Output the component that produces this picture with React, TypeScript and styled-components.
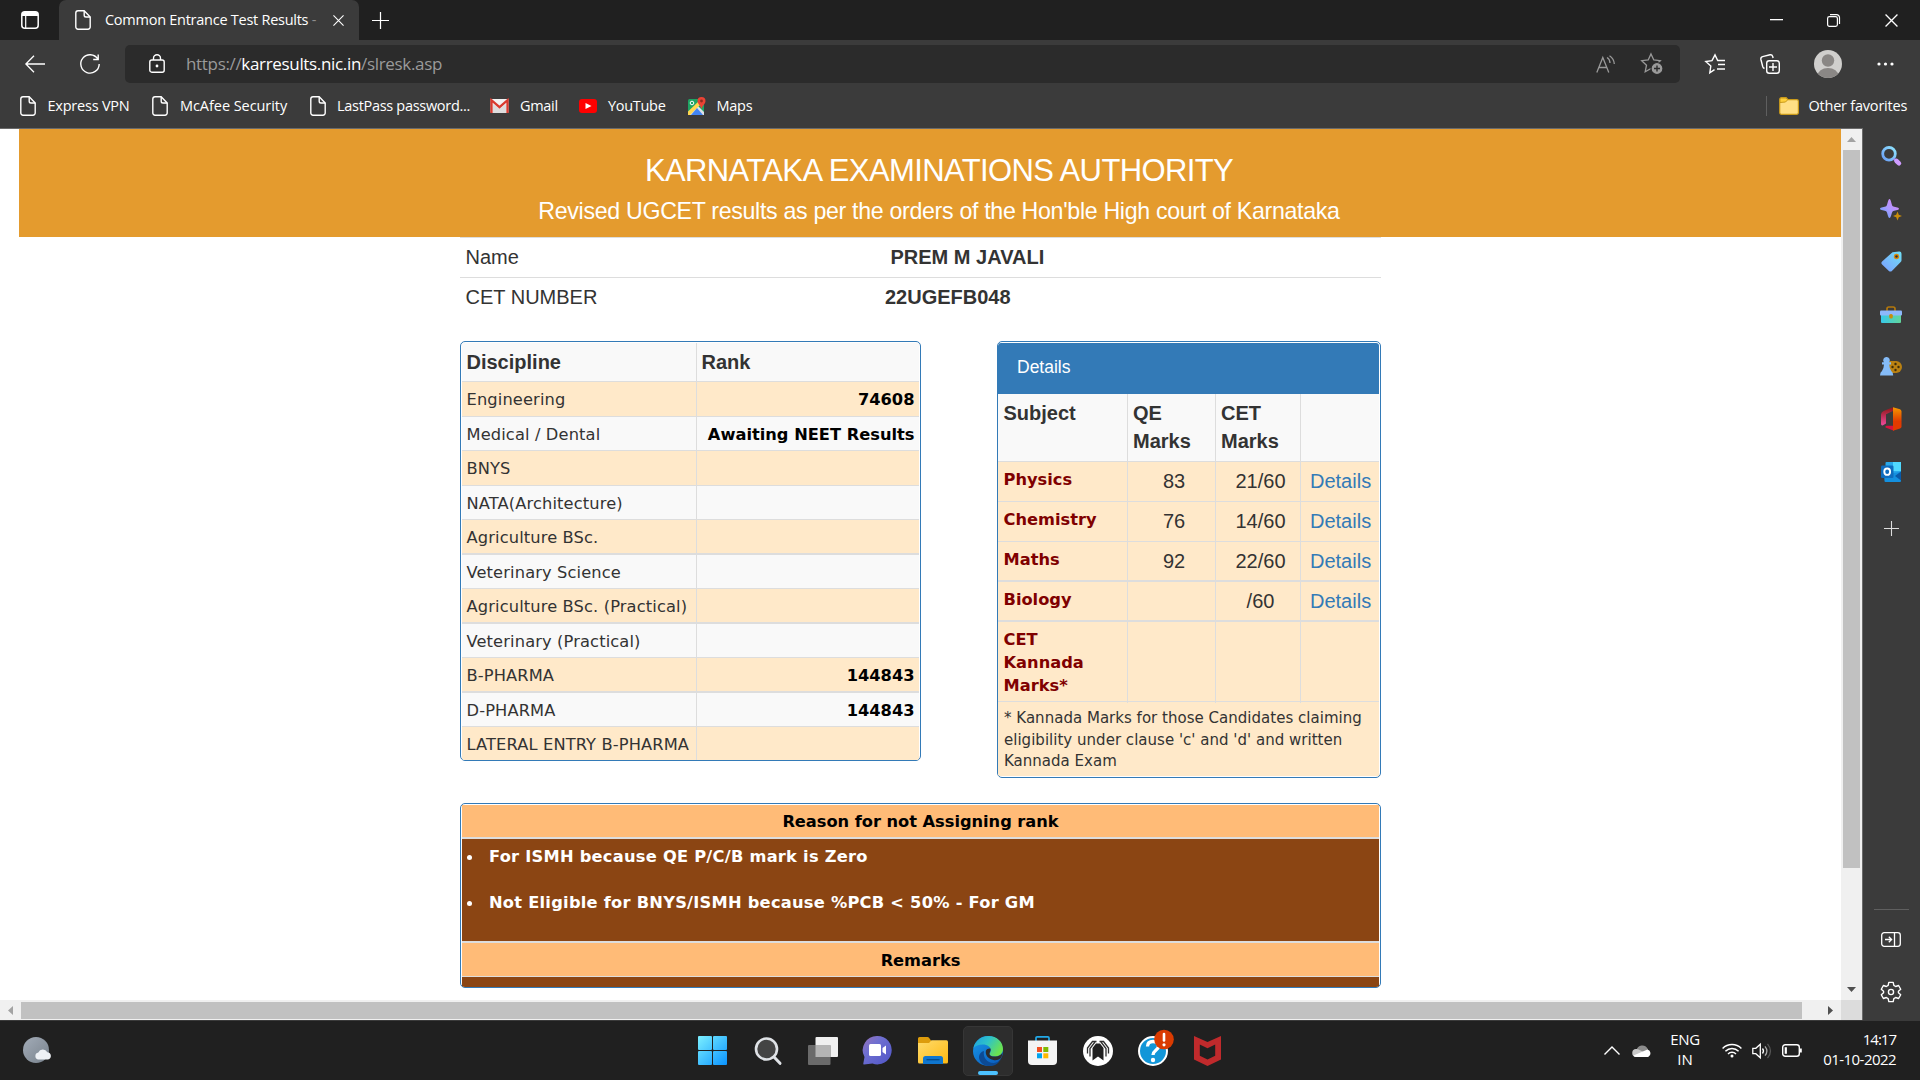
import React from "react";
import styled, { createGlobalStyle } from "styled-components";

const ui = `"Open Sans", "Noto Sans", sans-serif`;
const arial = `"Liberation Sans", Arial, sans-serif`;
const verdana = `"DejaVu Sans", Verdana, sans-serif`;

const GlobalStyle = createGlobalStyle`
  * { box-sizing: border-box; }
  html, body { margin: 0; padding: 0; overflow: hidden; background: #202020; }
  svg { display: block; flex: none; overflow: visible; }
`;

const Window = styled.div`
  width: 1920px;
  height: 1080px;
  display: flex;
  flex-direction: column;
  font-family: ${ui};
  color: #fff;
  background: #3b3b3b;
  overflow: hidden;
`;

const Label = styled.span<{ $size?: number; $track?: number; $color?: string }>`
  flex: none;
  white-space: pre;
  font-size: ${(p) => p.$size ?? 14.5}px;
  letter-spacing: ${(p) => p.$track ?? 0}px;
  color: ${(p) => p.$color ?? "#fff"};
`;

const Slot = styled.div<{ $w: number; $h?: number }>`
  flex: none;
  width: ${(p) => p.$w}px;
  height: ${(p) => (p.$h ? `${p.$h}px` : "100%")};
  display: flex;
  align-items: center;
  justify-content: center;
`;

/* ---------- title bar ---------- */
const TitleBar = styled.header`
  flex: none;
  height: 40px;
  display: flex;
  align-items: center;
  background: #202020;
`;
const Tab = styled.div`
  flex: none;
  width: 300px;
  height: 40px;
  display: flex;
  align-items: center;
  padding-left: 14px;
  background: #3b3b3b;
  border-radius: 7px 7px 0 0;
`;
const TabTitle = styled.div`
  width: 221px;
  padding-left: 12px;
  margin-top: -2px;
  white-space: nowrap;
`;
const Spacer = styled.div`
  flex: 1;
`;

/* ---------- toolbar ---------- */
const Toolbar = styled.div`
  flex: none;
  height: 47px;
  display: flex;
  align-items: center;
`;
const AddressBar = styled.div`
  flex: none;
  width: 1555px;
  height: 38px;
  display: flex;
  align-items: center;
  border-radius: 5px;
  background: #2b2b2b;
`;
const Url = styled.div`
  padding-left: 17px;
  padding-bottom: 1px;
  display: flex;
`;
const Bookmarks = styled.nav`
  flex: none;
  height: 41px;
  display: flex;
  align-items: center;
  padding: 0 13px 3px 20px;
`;
const Bookmark = styled.div<{ $w: number; $gap: number }>`
  flex: none;
  width: ${(p) => p.$w}px;
  display: flex;
  align-items: center;
  gap: ${(p) => p.$gap}px;
  > span { margin-top: -2px; }
`;
const Divider = styled.div<{ $w: number; $h: number }>`
  flex: none;
  width: ${(p) => p.$w}px;
  height: ${(p) => p.$h}px;
  background: #5f5f5f;
`;

/* ---------- viewport ---------- */
const Middle = styled.div`
  flex: none;
  height: 892px;
  display: flex;
`;
const Viewport = styled.div`
  width: 1863px;
  display: grid;
  grid-template-columns: 1841px 21px;
  grid-template-rows: 871px 20px;
  border-top: 1px solid #6a6a6a;
  border-right: 1px solid #6a6a6a;
  background: #fff;
`;
const Page = styled.main`
  overflow: hidden;
  padding-left: 19px;
  background: #fff;
  color: #333;
  font-family: ${arial};
`;
const VScroll = styled.div`
  display: flex;
  flex-direction: column;
  align-items: center;
  justify-content: space-between;
  background: #f0f0f0;
`;
const HScroll = styled.div`
  display: flex;
  align-items: center;
  justify-content: space-between;
  background: #f0f0f0;
`;
const VThumb = styled.div`
  width: 17px;
  height: 718px;
  background: #c1c1c1;
`;
const HThumb = styled.div`
  width: 1781px;
  height: 17px;
  background: #c1c1c1;
`;
const Corner = styled.div`
  background: #dcdcdc;
`;

/* ---------- page content ---------- */
const Banner = styled.div`
  height: 108px;
  padding-top: 24px;
  text-align: center;
  color: #fff;
  background: #e49b2e;
`;
const Title = styled.h1`
  margin: 0 -18px 0 0;
  font-weight: 400;
  font-size: 31px;
  line-height: 36px;
  letter-spacing: -0.62px;
`;
const Subtitle = styled.h2`
  margin: 4px -18px 0 0;
  font-weight: 400;
  font-size: 23.2px;
  line-height: 36px;
  letter-spacing: -0.32px;
`;
const Content = styled.div`
  width: 921px;
  margin-left: 441px;
`;
const Identity = styled.div<{ $indent: number }>`
  height: 40px;
  display: flex;
  align-items: center;
  border-top: 1px solid #ddd;
  padding-left: 5.5px;
  font-size: 20px;
  > span { width: ${(p) => p.$indent}px; }
`;
const Panels = styled.div<{ $top: number }>`
  display: flex;
  align-items: flex-start;
  justify-content: space-between;
  margin-top: ${(p) => p.$top}px;
`;
const Panel = styled.section<{ $w: number; $h: number; $flush?: boolean }>`
  width: ${(p) => p.$w}px;
  height: ${(p) => p.$h}px;
  overflow: hidden;
  border: 1px solid #337ab7;
  border-radius: 5px;
  padding: 1px;
  padding-left: ${(p) => (p.$flush ? 0 : 1)}px;
  background: #fff;
`;
const RankRow = styled.div<{ $h: number; $tint?: boolean; $line?: number }>`
  height: ${(p) => p.$h}px;
  display: grid;
  grid-template-columns: 234px 1fr;
  background: ${(p) => (p.$tint ? "#ffe9c9" : "#f9f9f9")};
  border-top: ${(p) => p.$line ?? 1}px solid #ddd;
`;
const Cell = styled.div<{ $head?: boolean; $end?: boolean }>`
  display: flex;
  align-items: center;
  justify-content: ${(p) => (p.$end ? "flex-end" : "flex-start")};
  padding: 1px 4.5px 0 4.5px;
  white-space: nowrap;
  font-family: ${(p) => (p.$head ? arial : verdana)};
  font-size: ${(p) => (p.$head ? 20 : 16.25)}px;
  letter-spacing: ${(p) => (p.$head || p.$end ? 0 : 0.13)}px;
  font-weight: ${(p) => (p.$head || p.$end ? 700 : 400)};
  color: ${(p) => (p.$end ? "#000" : "#333")};
  & + & { border-left: 1px solid #ddd; }
`;
const PanelHead = styled.div`
  height: 51px;
  display: flex;
  align-items: center;
  padding: 0 0 3px 19px;
  border-radius: 3px 3px 0 0;
  color: #fff;
  background: #337ab7;
  font-size: 17.5px;
`;
const MarksRow = styled.div<{ $h: number; $head?: boolean; $line?: number }>`
  height: ${(p) => p.$h}px;
  display: grid;
  grid-template-columns: 129px 88px 85px 1fr;
  background: ${(p) => (p.$head ? "#f9f9f9" : "#ffe9c9")};
  border-top: ${(p) => p.$line ?? 1}px solid #ddd;
`;
const MarksCell = styled.div<{ $kind: "head" | "subject" | "mark" | "link" }>`
  padding: ${(p) => ({ head: "5px 5px", subject: "6px 5.5px", mark: "5px 0 0 5px", link: "5px 0 0 9px" })[p.$kind]};
  text-align: ${(p) => (p.$kind === "mark" ? "center" : "left")};
  font-family: ${(p) => (p.$kind === "subject" ? verdana : arial)};
  font-size: ${(p) => (p.$kind === "subject" ? 16.25 : 20)}px;
  line-height: ${(p) => (p.$kind === "subject" ? 23 : 28)}px;
  font-weight: ${(p) => (p.$kind === "head" || p.$kind === "subject" ? 700 : 400)};
  color: ${(p) => ({ head: "#333", subject: "#800000", mark: "#333", link: "#337ab7" })[p.$kind]};
  &:first-child { padding-left: 5.5px; }
  & + & { border-left: 1px solid #ddd; }
  &:nth-child(2) { border-left-width: 2px; }
`;
const Note = styled.div`
  height: 75px;
  padding: 6px 5px 0 6px;
  white-space: pre;
  font-family: ${verdana};
  font-size: 15px;
  line-height: 21.5px;
  letter-spacing: 0.02px;
  background: #ffe9c9;
  border-top: 1px solid #ddd;
`;
const ReasonHead = styled.div<{ $h: number; $line?: number }>`
  height: ${(p) => p.$h}px;
  display: flex;
  align-items: center;
  justify-content: center;
  padding-top: 1px;
  font-family: ${verdana};
  font-size: 16.25px;
  letter-spacing: -0.03px;
  font-weight: 700;
  color: #000;
  background: #ffbb77;
  border-top: ${(p) => p.$line ?? 0}px solid #ddd;
`;
const ReasonBody = styled.ul<{ $h: number; $line: number }>`
  height: ${(p) => p.$h}px;
  margin: 0;
  padding: 6px 0 0 5px;
  list-style: none;
  font-family: ${verdana};
  font-size: 16.25px;
  letter-spacing: 0.25px;
  line-height: 23px;
  font-weight: 700;
  color: #fff;
  background: #8b4513;
  border-top: ${(p) => p.$line}px solid #ddd;
  > li {
    display: flex;
    align-items: center;
    gap: 17px;
    margin-bottom: 23px;
  }
  > li::before {
    content: "";
    width: 5px;
    height: 5px;
    margin-top: 2px;
    border-radius: 50%;
    background: #fff;
  }
`;

/* ---------- sidebar & taskbar ---------- */
const Sidebar = styled.aside`
  flex: 1;
  display: flex;
  flex-direction: column;
  align-items: center;
  padding-right: 1px;
  background: #3b3b3b;
`;
const Taskbar = styled.footer`
  flex: none;
  height: 60px;
  display: flex;
  align-items: center;
  background: #202020;
  border-top: 1px solid #3a3a3a;
`;
const ActiveApp = styled.div`
  width: 50px;
  height: 50px;
  display: flex;
  flex-direction: column;
  align-items: center;
  justify-content: space-between;
  padding: 9px 0 0;
  border-radius: 5px;
  border: 1px solid #363636;
  background: #2d2d2d;
`;
const Indicator = styled.div`
  width: 20px;
  height: 4px;
  border-radius: 2px;
  background: #4cc2ff;
`;
const Stack = styled.div<{ $w: number; $end?: boolean }>`
  flex: none;
  width: ${(p) => p.$w}px;
  display: flex;
  flex-direction: column;
  align-items: ${(p) => (p.$end ? "flex-end" : "center")};
  line-height: 20px;
  padding-bottom: ${(p) => (p.$end ? 4 : 3)}px;
`;

/* ---------- icons ---------- */
const Doc = ({ w = 16 }: { w?: number }) => (
  <svg width={w} height={(w * 20) / 16} viewBox="0 0 16 20" fill="none" stroke="#fff" strokeWidth="1.4" strokeLinejoin="round">
    <path d="M3 .8h6.2L15.2 7v10a2.2 2.2 0 0 1-2.2 2.2H3A2.2 2.2 0 0 1 .8 17V3A2.2 2.2 0 0 1 3 .8z" />
    <path d="M9.2 .8v4.4A1.8 1.8 0 0 0 11 7h4.2" />
  </svg>
);
const Plus = ({ s = 18, c = "#fff" }: { s?: number; c?: string }) => (
  <svg width={s} height={s} viewBox="0 0 18 18" stroke={c} strokeWidth="1.3"><path d="M9 0v18M0 9h18" /></svg>
);
const Cross = ({ s }: { s: number }) => (
  <svg width={s} height={s} viewBox="0 0 12 12" stroke="#fff" strokeWidth="1.2"><path d="M.5.5l11 11M11.5.5l-11 11" /></svg>
);
const Sparkle = () => (
  <svg width="22" height="22" viewBox="0 0 22 22">
    <defs><linearGradient id="sp" x1="0" y1="1" x2="1" y2="0"><stop offset="0" stopColor="#4f9ef8" /><stop offset=".45" stopColor="#a99bff" /><stop offset="1" stopColor="#e080f5" /></linearGradient></defs>
    <path d="M9.5 0c1.5 0 2 6.300 3.300 7.200C14 8.200 19 8.200 19 9.700s-5 1.500-6.200 2.500C11.500 13.500 11 19 9.500 19S7.500 13.500 6.200 12.200C5 11.200 0 11.200 0 9.700s5-1.500 6.200-2.500C7.500 6.300 8 0 9.500 0z" fill="url(#sp)" />
    <path d="M17.500 12.500l1.300 3.200 3.200 1.300-3.200 1.300-1.300 3.200-1.300-3.200-3.200-1.300 3.200-1.300z" fill="#c98d0a" />
  </svg>
);
const starPath = "M10 .9l2.800 6 6.500.8-4.800 4.500 1.300 6.500L10 15.500l-5.800 3.200 1.300-6.500L.7 7.700l6.500-.8z";

const disciplines: [string, string, number, number][] = [
  ["Engineering", "74608", 35, 1],
  ["Medical / Dental", "Awaiting NEET Results", 34, 1],
  ["BNYS", "", 35, 1],
  ["NATA(Architecture)", "", 34, 1],
  ["Agriculture BSc.", "", 34, 1],
  ["Veterinary Science", "", 35, 2],
  ["Agriculture BSc. (Practical)", "", 34, 1],
  ["Veterinary (Practical)", "", 35, 2],
  ["B-PHARMA", "144843", 34, 1],
  ["D-PHARMA", "144843", 35, 2],
  ["LATERAL ENTRY B-PHARMA", "", 34, 1],
];
const marks: [string, string, string, string, number, number][] = [
  ["Physics", "83", "21/60", "Details", 40, 1],
  ["Chemistry", "76", "14/60", "Details", 40, 1],
  ["Maths", "92", "22/60", "Details", 39, 1],
  ["Biology", "", "/60", "Details", 40, 2],
  ["CET\nKannada\nMarks*", "", "", "", 81, 2],
];

export default function App() {
  return (
    <Window>
      <GlobalStyle />
      <TitleBar>
        <Slot $w={59}>
          <svg width="18" height="18" viewBox="0 0 18 18">
            <rect x=".8" y=".8" width="16.400" height="16.400" rx="3" fill="none" stroke="#fff" strokeWidth="1.500" />
            <path d="M1 5V3.500A2.500 2.500 0 0 1 3.500 1h11A2.500 2.500 0 0 1 17 3.500V5z" fill="#fff" />
            <path d="M4.700 5v12" stroke="#fff" strokeWidth="1.200" />
          </svg>
        </Slot>
        <Tab>
          <Slot $w={20}><Doc /></Slot>
          <TabTitle><Label $track={-0.26}>Common Entrance Test Results <Label $color="#8d8d8d">-</Label></Label></TabTitle>
          <Slot $w={48}><Cross s={11} /></Slot>
        </Tab>
        <Slot $w={43}><Plus s={17} /></Slot>
        <Spacer />
        <Slot $w={58}><svg width="13" height="2"><rect width="13" height="1.300" fill="#fff" /></svg></Slot>
        <Slot $w={57}>
          <svg width="13" height="13" viewBox="0 0 13 13" fill="none" stroke="#fff" strokeWidth="1.200">
            <rect x=".6" y="2.600" width="9.800" height="9.800" rx="1.800" /><path d="M3 .6h6.500a3 3 0 0 1 3 3V10" />
          </svg>
        </Slot>
        <Slot $w={58}><Cross s={13} /></Slot>
      </TitleBar>

      <Toolbar>
        <Slot $w={70}>
          <svg width="20" height="18" viewBox="0 0 20 18" fill="none" stroke="#fff" strokeWidth="1.300"><path d="M20 9H1M9 .8L.9 9 9 17.200" /></svg>
        </Slot>
        <Slot $w={40}>
          <svg width="20" height="20" viewBox="0 0 20 20" fill="none" stroke="#fff" strokeWidth="1.400"><path d="M17.800 5A9.200 9.200 0 1 0 19.200 10M18.200 .5V5.500h-5" /></svg>
        </Slot>
        <Slot $w={15} />
        <AddressBar>
          <Slot $w={20} />
          <Slot $w={24}>
            <svg width="16" height="19" viewBox="0 0 16 19" fill="none" stroke="#fff" strokeWidth="1.400">
              <rect x=".8" y="6" width="14.400" height="12.200" rx="2" /><path d="M4.500 6V4.200a3.500 3.500 0 0 1 7 0V6" /><circle cx="8" cy="12" r=".7" fill="#fff" />
            </svg>
          </Slot>
          <Url>
            <Label $size={17} $track={-0.33} $color="#9a9a9a">https://</Label>
            <Label $size={17} $track={-0.33}>karresults.nic.in</Label>
            <Label $size={17} $track={-0.33} $color="#9a9a9a">/slresk.asp</Label>
          </Url>
          <Spacer />
          <Slot $w={46}>
            <svg width="20" height="18" viewBox="0 0 20 18" fill="none" stroke="#9a9a9a" strokeWidth="1.300">
              <path d="M.8 17.500L6.800 2.500l6 15M3 12.500h7.600M11 2.500c2 1.200 3 3 3 5.500M13.500 .8c3 2 4.600 4.700 4.800 8.200" />
            </svg>
          </Slot>
          <Slot $w={46}>
            <svg width="22" height="21" viewBox="0 0 22 21" fill="none" stroke="#9a9a9a" strokeWidth="1.300">
              <path d={starPath} /><circle cx="16" cy="15.500" r="6" fill="#9a9a9a" stroke="#2b2b2b" strokeWidth="1.200" /><path d="M16 12.500v6M13 15.500h6" stroke="#2b2b2b" strokeWidth="1.400" />
            </svg>
          </Slot>
          <Slot $w={5} />
        </AddressBar>
        <Slot $w={70}>
          <svg width="20" height="20" viewBox="0 0 20 20" fill="none" stroke="#fff" strokeWidth="1.400">
            <path d="M9.500 15.600L4.800 18.800l1-6.700L.8 7.500l6.200-.9L10 .9l2.700 5.600H20M13 10.500h7M12 15h8" />
          </svg>
        </Slot>
        <Slot $w={40}>
          <svg width="20" height="20" viewBox="0 0 20 20" fill="none" stroke="#fff" strokeWidth="1.400">
            <rect x="6.700" y="6.700" width="12.600" height="12.600" rx="2.500" /><path d="M13 9v8M9 13h8M4.500 14.500C3.500 14 3 13.500 2.700 12.500L.9 5.500C.6 4 1.200 3 2.600 2.600L10 .8c1.400-.3 2.300.4 2.700 1.700l.4 1.500" />
          </svg>
        </Slot>
        <Slot $w={76}>
          <svg width="28" height="28" viewBox="0 0 28 28">
            <defs><clipPath id="av"><circle cx="14" cy="14" r="14" /></clipPath></defs>
            <circle cx="14" cy="14" r="14" fill="#d0cfcd" /><circle cx="14" cy="10.500" r="6.200" fill="#8a8785" />
            <ellipse cx="14" cy="26" rx="10.500" ry="8" fill="#8a8785" clipPath="url(#av)" />
          </svg>
        </Slot>
        <Slot $w={38}>
          <svg width="17" height="4" viewBox="0 0 17 4" fill="#fff"><circle cx="2" cy="2" r="1.600" /><circle cx="8.500" cy="2" r="1.600" /><circle cx="15" cy="2" r="1.600" /></svg>
        </Slot>
      </Toolbar>

      <Bookmarks>
        <Bookmark $w={132} $gap={11.5}><Doc /><Label $track={-0.22}>Express VPN</Label></Bookmark>
        <Bookmark $w={158} $gap={12}><Doc /><Label $track={-0.06}>McAfee Security</Label></Bookmark>
        <Bookmark $w={180} $gap={11}><Doc /><Label $track={-0.3}>LastPass password...</Label></Bookmark>
        <Bookmark $w={89} $gap={11}>
          <svg width="19" height="16" viewBox="0 0 19 16"><rect x=".5" y="1" width="18" height="14" rx="1" fill="#f2f2f2" /><path d="M3 15V6l6.500 5L16 6v9z" fill="#ddd" /><path d="M1.500 15V2.200l8 7 8-7V15" fill="none" stroke="#d93a2f" strokeWidth="2.300" /></svg>
          <Label $track={-0.3}>Gmail</Label>
        </Bookmark>
        <Bookmark $w={109} $gap={11}>
          <svg width="18" height="14" viewBox="0 0 18 14"><rect width="18" height="14" rx="3" fill="#f00" /><path d="M6.500 4l6 3-6 3z" fill="#fff" /></svg>
          <Label $track={-0.3}>YouTube</Label>
        </Bookmark>
        <Bookmark $w={90} $gap={10.5}>
          <svg width="18" height="18" viewBox="0 0 18 18">
            <rect x="0" y="2" width="16" height="16" rx="1.500" fill="#1fa463" /><path d="M0 17L9 8l7 7v3H0z" fill="#dde1e6" /><path d="M0 14.500L12 3l3 2L2 18H0z" fill="#ffd64f" /><path d="M9 11l6 7H3z" fill="#4285f4" />
            <path d="M13.500 0a4 4 0 0 1 4 4c0 3-3 4-4 8-1-4-4-5-4-8a4 4 0 0 1 4-4z" fill="#ea4335" /><circle cx="13.500" cy="4" r="1.400" fill="#8c2d20" />
            <circle cx="4" cy="6" r="1.800" fill="none" stroke="#fff" strokeWidth="1" />
          </svg>
          <Label $track={-0.25}>Maps</Label>
        </Bookmark>
        <Spacer />
        <Divider $w={1} $h={20} />
        <Slot $w={12} $h={20} />
        <Bookmark $w={128} $gap={9.5}>
          <svg width="20" height="18" viewBox="0 0 20 18"><path d="M.7 2.500A1.800 1.800 0 0 1 2.500.7h4.600L9 2.600h8.700A1.700 1.700 0 0 1 19.400 4.300v11.300a1.700 1.700 0 0 1-1.700 1.700H2.400A1.700 1.700 0 0 1 .7 15.600z" fill="#ffdf85" stroke="#c99a1b" strokeWidth="1.200" /><path d="M1 5.500V2.500A1.600 1.600 0 0 1 2.500 1h4.500l1.700 1.800L6.500 5z" fill="#ffd03c" stroke="#c99a1b" /></svg>
          <Label $track={-0.22}>Other favorites</Label>
        </Bookmark>
      </Bookmarks>

      <Middle>
        <Viewport>
          <Page>
            <Banner>
              <Title>KARNATAKA EXAMINATIONS AUTHORITY</Title>
              <Subtitle>Revised UGCET results as per the orders of the Hon'ble High court of Karnataka</Subtitle>
            </Banner>
            <Content>
              <Identity $indent={425}><span>Name</span><b>PREM M JAVALI</b></Identity>
              <Identity $indent={419.5}><span>CET NUMBER</span><b>22UGEFB048</b></Identity>
              <Panels $top={24}>
                <Panel $w={461} $h={420}>
                  <RankRow $h={38} $line={0}><Cell $head>Discipline</Cell><Cell $head>Rank</Cell></RankRow>
                  {disciplines.map(([name, rank, h, line], i) => (
                    <RankRow key={name} $h={h} $line={line} $tint={i % 2 === 0}>
                      <Cell>{name}</Cell>
                      <Cell $end>{rank}</Cell>
                    </RankRow>
                  ))}
                </Panel>
                <Panel $w={384} $h={437} $flush>
                  <PanelHead>Details</PanelHead>
                  <MarksRow $h={67} $line={0} $head>
                    <MarksCell $kind="head">Subject</MarksCell><MarksCell $kind="head">QE Marks</MarksCell><MarksCell $kind="head">CET Marks</MarksCell><MarksCell $kind="head" />
                  </MarksRow>
                  {marks.map(([s, qe, cet, d, h, line]) => (
                    <MarksRow key={s} $h={h} $line={line}>
                      <MarksCell $kind="subject">{s.split("\n").map((t) => <div key={t}>{t}</div>)}</MarksCell>
                      <MarksCell $kind="mark">{qe}</MarksCell>
                      <MarksCell $kind="mark">{cet}</MarksCell>
                      <MarksCell $kind="link">{d}</MarksCell>
                    </MarksRow>
                  ))}
                  <Note>{"* Kannada Marks for those Candidates claiming\neligibility under clause 'c' and 'd' and written\nKannada Exam"}</Note>
                </Panel>
              </Panels>
              <Panels $top={25}>
                <Panel $w={921} $h={185}>
                  <ReasonHead $h={32}>Reason for not Assigning rank</ReasonHead>
                  <ReasonBody $h={104} $line={2}>
                    <li>For ISMH because QE P/C/B mark is Zero</li>
                    <li>Not Eligible for BNYS/ISMH because %PCB &lt; 50% - For GM</li>
                  </ReasonBody>
                  <ReasonHead $h={35} $line={2}>Remarks</ReasonHead>
                  <ReasonBody $h={12} $line={1} />
                </Panel>
              </Panels>
            </Content>
          </Page>
          <VScroll>
            <Slot $w={21} $h={21}><svg width="9" height="5"><path d="M4.500 0L9 5H0z" fill="#a3a3a3" /></svg></Slot>
            <VThumb />
            <Slot $w={21} $h={111} />
            <Slot $w={21} $h={21}><svg width="9" height="5"><path d="M4.500 5L9 0H0z" fill="#505050" /></svg></Slot>
          </VScroll>
          <HScroll>
            <Slot $w={21} $h={20}><svg width="5" height="9"><path d="M0 4.500L5 0v9z" fill="#a3a3a3" /></svg></Slot>
            <HThumb />
            <Spacer />
            <Slot $w={21} $h={20}><svg width="5" height="9"><path d="M5 4.500L0 0v9z" fill="#505050" /></svg></Slot>
          </HScroll>
          <Corner />
        </Viewport>
        <Sidebar>
          <Slot $w={56} $h={56}>
            <svg width="21" height="20" viewBox="0 0 21 20">
              <defs><linearGradient id="sr" x1="0" y1="1" x2="1" y2="0"><stop offset="0" stopColor="#6a9df5" /><stop offset="1" stopColor="#8fe4ff" /></linearGradient></defs>
              <circle cx="8" cy="7.800" r="6.300" fill="none" stroke="url(#sr)" strokeWidth="2.800" /><path d="M12.800 12.600l2 2" stroke="#9a8cf0" strokeWidth="2.500" /><path d="M15.500 15l2.500 2.300" stroke="#cf9cff" strokeWidth="4.500" strokeLinecap="round" />
            </svg>
          </Slot>
          <Slot $w={56} $h={52}><Sparkle /></Slot>
          <Slot $w={56} $h={51}>
            <svg width="21" height="21" viewBox="0 0 21 21">
              <defs><linearGradient id="tg" x1="0" y1="1" x2="1" y2="0"><stop offset="0" stopColor="#7c9dff" /><stop offset="1" stopColor="#6fe0f5" /></linearGradient></defs>
              <path d="M11.500 1.200L18 .5q2.500-.3 2.500 2.200v6.500q0 1-.8 1.800l-8.800 9q-1.500 1.200-3 0l-6.800-6.600q-1.500-1.500 0-3z" fill="url(#tg)" /><circle cx="15.500" cy="5.500" r="2.700" fill="#d98a0b" /><circle cx="15.500" cy="5.500" r="1.300" fill="#333" />
            </svg>
          </Slot>
          <Slot $w={56} $h={54}>
            <svg width="22" height="17" viewBox="0 0 22 17">
              <defs><linearGradient id="tb" x1="0" y1="0" x2="1" y2="0"><stop offset="0" stopColor="#37c9ea" /><stop offset="1" stopColor="#62d59b" /></linearGradient></defs>
              <path d="M7 5V2.800Q7 1 8.800 1h4.400Q15 1 15 2.800V5" fill="none" stroke="#b4780c" strokeWidth="1.700" /><rect x="1" y="6" width="20" height="11" rx="1" fill="url(#tb)" /><rect x="0" y="4.500" width="22" height="5" rx="1" fill="#8db8fb" /><rect x="9.200" y="8" width="3.600" height="4.500" rx="1.500" fill="#c98d0a" />
            </svg>
          </Slot>
          <Slot $w={56} $h={51}>
            <svg width="22" height="19" viewBox="0 0 22 19">
              <rect x="10" y="4" width="12" height="12" rx="6" fill="#b98112" /><rect x="8" y="4" width="9" height="12" rx="2" fill="#b98112" /><g fill="#3b2c0c"><circle cx="15.500" cy="7" r="1.200" /><circle cx="15.500" cy="13" r="1.200" /><circle cx="12.500" cy="10" r="1.200" /><circle cx="18.500" cy="10" r="1.200" /></g>
              <path d="M6.500 0a3.200 3.200 0 0 1 2.600 5.200H11v2.300H9.200q.2 4 2 6.500 2 1 2 4.500H0q0-3.500 2-4.500 1.800-2.500 2-6.500H2V5.200h1.900A3.200 3.200 0 0 1 6.500 0z" fill="#85bcf8" />
            </svg>
          </Slot>
          <Slot $w={56} $h={54}>
            <svg width="21" height="24" viewBox="0 0 21 24">
              <defs><linearGradient id="of" x1="0" y1="0" x2="0" y2="1"><stop offset="0" stopColor="#8f1515" /><stop offset="1" stopColor="#ef4b9c" /></linearGradient><linearGradient id="of2" x1="0" y1="0" x2="0" y2="1"><stop offset="0" stopColor="#f59a00" /><stop offset=".6" stopColor="#e23a00" /></linearGradient></defs>
              <path d="M12 .2L2.500 4Q0 5 0 7.500v9Q0 19 2 18.200l3-1.700V7.200L12 4z" fill="url(#of)" /><path d="M4.500 20.500q-.5-1.800 1.200-1.700H13v5z" fill="#d8123f" /><path d="M12 .2l7 2Q20.500 3 20.500 4.500v15q0 1.500-1.500 2.100L12 23.800z" fill="url(#of2)" />
            </svg>
          </Slot>
          <Slot $w={56} $h={51}>
            <svg width="20" height="20" viewBox="0 0 20 20">
              <rect x="4.500" y="0" width="15.500" height="12" rx="1" fill="#28a8ea" /><rect x="12" y="0" width="8" height="9" fill="#50d9ff" /><path d="M3 12l17-2v9q0 1-1 1H4.500q-1 0-1-1z" fill="#1490df" /><path d="M20 9.500v9l-6-4.500z" fill="#0a5aa8" /><rect x="0" y="3.500" width="12.500" height="12.500" rx="1.300" fill="#0f6cbd" />
              <ellipse cx="6.200" cy="9.700" rx="2.900" ry="3.200" fill="none" stroke="#fff" strokeWidth="1.900" />
            </svg>
          </Slot>
          <Slot $w={56} $h={62}><Plus s={15} c="#ddd" /></Slot>
          <Spacer />
          <Divider $w={35} $h={1} />
          <Slot $w={56} $h={59}>
            <svg width="20" height="15" viewBox="0 0 20 15" fill="none" stroke="#fff" strokeWidth="1.300"><rect x=".7" y=".7" width="18.600" height="13.600" rx="2.500" /><path d="M13.500 .7v13.600M4 7.500h6.500M7.800 4.700l2.800 2.800-2.800 2.800" /></svg>
          </Slot>
          <Slot $w={56} $h={45}>
            <svg width="22" height="22" viewBox="0 0 24 24" fill="none" stroke="#fff" strokeWidth="1.500" strokeLinejoin="round">
              <path d="M9.600 1.500h4.800l.7 3.300 2 1.200 3.200-1.100 2.300 4.100-2.500 2.200v1.600l2.500 2.200-2.300 4.100-3.200-1.100-2 1.200-.7 3.300H9.600l-.7-3.300-2-1.200-3.200 1.100-2.300-4.100 2.500-2.200v-1.600L1.400 9l2.300-4.100L6.900 6l2-1.200z" /><circle cx="12" cy="12" r="2.800" />
            </svg>
          </Slot>
          <Slot $w={56} $h={6} />
        </Sidebar>
      </Middle>

      <Taskbar>
        <Slot $w={74}>
          <svg width="30" height="28" viewBox="0 0 30 28">
            <defs><linearGradient id="mo" x1="0" y1="0" x2="1" y2="1"><stop offset="0" stopColor="#a3acb8" /><stop offset="1" stopColor="#78828c" /></linearGradient></defs>
            <circle cx="14" cy="13" r="13" fill="url(#mo)" /><path d="M16 22.500a3.600 3.600 0 0 1 .3-7 5 5 0 0 1 9-.3 3.700 3.700 0 0 1 .7 7.300z" fill="#eef1f5" />
          </svg>
        </Slot>
        <Slot $w={610} />
        <Slot $w={56}>
          <svg width="29" height="29" viewBox="0 0 29 29">
            <defs><linearGradient id="wi" gradientUnits="userSpaceOnUse" x1="0" y1="0" x2="29" y2="29"><stop offset="0" stopColor="#7cf0ff" /><stop offset="1" stopColor="#0a93ff" /></linearGradient></defs>
            <g fill="url(#wi)"><rect width="14" height="14" rx="1" /><rect x="15" width="14" height="14" rx="1" /><rect y="15" width="14" height="14" rx="1" /><rect x="15" y="15" width="14" height="14" rx="1" /></g>
          </svg>
        </Slot>
        <Slot $w={55}><svg width="28" height="28" viewBox="0 0 28 28"><circle cx="12.500" cy="12" r="10.500" fill="#444" stroke="#dfe2e6" strokeWidth="2.600" /><path d="M20 20l6 6.300" stroke="#dfe2e6" strokeWidth="3" strokeLinecap="round" /></svg></Slot>
        <Slot $w={55}><svg width="30" height="28" viewBox="0 0 30 28"><rect x="7.500" y="0" width="22.500" height="20" rx="1" fill="#f0f0f0" /><rect x="0" y="8" width="22.500" height="20" rx="1" fill="#6a6a6a" /><path d="M7.500 8h15v12h-15z" fill="#b4b4b4" /></svg></Slot>
        <Slot $w={55}>
          <svg width="29" height="29" viewBox="0 0 29 29">
            <defs><linearGradient id="ch" x1="0" y1="0" x2="1" y2="1"><stop offset="0" stopColor="#9a72b8" /><stop offset=".35" stopColor="#6f6fd0" /><stop offset="1" stopColor="#4f55c8" /></linearGradient></defs>
            <path d="M14.500 0a14.200 14.200 0 1 1-5 27.500L1 28.500q-1 0-.7-1L1.500 21A14.200 14.200 0 0 1 14.500 0z" fill="url(#ch)" /><rect x="6" y="8" width="12" height="12" rx="1.500" fill="#fff" /><path d="M19.500 12l3.500-2.500v9L19.500 16z" fill="#fff" />
          </svg>
        </Slot>
        <Slot $w={56}>
          <svg width="30" height="27" viewBox="0 0 30 27">
            <defs><linearGradient id="fo" x1="0" y1="0" x2="1" y2="1"><stop offset="0" stopColor="#ffdb6b" /><stop offset="1" stopColor="#fdb913" /></linearGradient></defs>
            <path d="M0 1.500Q0 0 1.500 0h8q1 0 1.500.7L13 3.500V8H0z" fill="#dd9c0c" /><path d="M0 6h11l2.500-2.700h15Q30 3.300 30 5v20q0 1.500-1.500 1.500h-27Q0 26.500 0 25z" fill="url(#fo)" /><path d="M5 27v-5.500Q5 19 7.500 19h15q2.500 0 2.500 2.500V27z" fill="#0f76cf" /><path d="M8.500 22.700h13" stroke="#064a8a" strokeWidth="1.300" />
          </svg>
        </Slot>
        <Slot $w={54}>
          <ActiveApp>
            <svg width="30" height="30" viewBox="0 0 30 30">
              <defs>
                <linearGradient id="e1" x1="0" y1="0" x2="1" y2=".5"><stop offset="0" stopColor="#1b9de2" /><stop offset=".5" stopColor="#2fc3c8" /><stop offset="1" stopColor="#6be34f" /></linearGradient>
                <linearGradient id="e2" x1="0" y1="0" x2=".7" y2="1"><stop offset="0" stopColor="#1a9bea" /><stop offset="1" stopColor="#0a5fc0" /></linearGradient>
              </defs>
              <circle cx="15" cy="15" r="15" fill="url(#e2)" />
              <path d="M.5 12C2 5 8 0 15.500 0 24 0 30 6 30 13c0 5-4 7.500-8 7.500-3.500 0-5.500-1.200-5.500-2.500 0-.8 1.300-1.500 1.300-4 0-3-3.300-5.500-8-5.500C5.500 8.500 2.500 10 .5 12z" fill="url(#e1)" />
              <path d="M11 15c-1.500 7 4 12.500 10 12 3-.3 5.500-2 7-4-3 6-8 7.500-13 7-5.500-.6-9-5-9-9 0-3 2-5.200 5-6z" fill="#0c4a94" />
              <path d="M13 14.500c.7-1.400 2-2.200 4.400-2 .9 2.500-1.200 3.900-.9 5.700.3 1.500 2.500 2.600 6 2.400 3-.2 5.300-1.600 6.900-3.600-.2 2.300-.7 3.800-1.500 5.300-2.500 1.700-5 2.200-7.400 1.700-5-.8-8.800-5-7.500-9.500z" fill="#2d2d2d" />
            </svg>
            <Indicator />
          </ActiveApp>
        </Slot>
        <Slot $w={55}>
          <svg width="29" height="29" viewBox="0 0 29 29">
            <path d="M8 6V2q0-1.200 1.200-1.200h10.600Q21 .8 21 2v4" fill="none" stroke="#22a9e8" strokeWidth="1.700" /><path d="M0 4.500h29V25q0 4-4 4H4q-4 0-4-4z" fill="#f4f4f4" />
            <rect x="9" y="11" width="5" height="5" fill="#f25022" /><rect x="15.300" y="11" width="5" height="5" fill="#7fba00" /><rect x="9" y="17.300" width="5" height="5" fill="#00a4ef" /><rect x="15.300" y="17.300" width="5" height="5" fill="#ffb900" />
          </svg>
        </Slot>
        <Slot $w={55}>
          <svg width="30" height="30" viewBox="0 0 30 30"><circle cx="15" cy="15" r="15" fill="#fff" /><path d="M9.500 24.500V12l3.500-4.500h4l3.500 4.500v12.500L15 20.500z" fill="#202020" /><path d="M4.500 17.500v-5.500L9.500 5.500H13.500M25.500 17.500v-5.500L20.500 5.500H16.500M7 20.500v-8L12 6M23 20.500v-8L18 6" fill="none" stroke="#303030" strokeWidth="1.300" /></svg>
        </Slot>
        <Slot $w={56}>
          <svg width="30" height="30" viewBox="0 0 30 30"><circle cx="15" cy="15" r="14" fill="#1296d8" stroke="#fff" strokeWidth="2" /><path d="M9.500 10.500c0-3.500 2.500-5 5.500-5s5.500 1.700 5.500 4.700c0 4-5.500 4.300-5.500 8.800" fill="none" stroke="#fff" strokeWidth="3.300" /><circle cx="15" cy="24" r="2.200" fill="#fff" /><circle cx="26" cy="3.500" r="9.800" fill="#da3b01" /><path d="M26-2v6.500" stroke="#fff" strokeWidth="2.600" strokeLinecap="round" /><circle cx="26" cy="8.800" r="1.600" fill="#fff" /></svg>
        </Slot>
        <Slot $w={52}>
          <svg width="27" height="30" viewBox="0 0 27 30"><path d="M0 0l13.500 6L27 0v23.500L13.500 30 0 23.500zM5.800 8.500v11.300l7.700 3.800 7.700-3.800V8.500l-7.700 3.700z" fill="#c02a2c" fillRule="evenodd" /></svg>
        </Slot>
        <Spacer />
        <Slot $w={34}><svg width="16" height="9" viewBox="0 0 16 9" fill="none" stroke="#fff" strokeWidth="1.400"><path d="M.5 8.500L8 1l7.500 7.500" /></svg></Slot>
        <Slot $w={26}>
          <svg width="20" height="13" viewBox="0 0 20 13"><path d="M4.500 6a6 6 0 0 1 11-1.500L17 8 8 12z" fill="#8b8b8b" /><path d="M4 13a4 4 0 0 1 .5-8q2 0 4 1.500L16 10l-3 3z" fill="#c9c9c9" /><path d="M1.500 11.500L15.500 5.500a4 4 0 0 1 .7 7.500H4q-1.500 0-2.500-1.500z" fill="#fff" /></svg>
        </Slot>
        <Stack $w={60}><Label $size={15} $track={-0.4}>ENG</Label><Label $size={15}>IN</Label></Stack>
        <Slot $w={34}>
          <svg width="20" height="15" viewBox="0 0 20 15" fill="none" stroke="#fff" strokeWidth="1.500"><path d="M.6 5.500a13.300 13.300 0 0 1 18.800 0M3.400 8.300a9.300 9.300 0 0 1 13.200 0M6 11a5.700 5.700 0 0 1 8 0" /><circle cx="10" cy="13" r="1.500" fill="#fff" stroke="none" /></svg>
        </Slot>
        <Slot $w={26}>
          <svg width="20" height="16" viewBox="0 0 20 16" fill="none" stroke="#fff" strokeWidth="1.300"><path d="M.8 5.300h3L8.300 1.200v13.600L3.800 10.700h-3zM10.500 5.500q2 2.500 0 5" /><path d="M13 3.300q3.800 4.700 0 9.400" stroke="#aaa" /><path d="M15.500 .8q6 7.200 0 14.400" stroke="#555" /></svg>
        </Slot>
        <Slot $w={34}>
          <svg width="20" height="13" viewBox="0 0 20 13" fill="none" stroke="#fff" strokeWidth="1.400"><rect x=".7" y=".7" width="16.600" height="11.600" rx="2.500" /><path d="M18.800 4.500v4" strokeWidth="2" /><path d="M3.800 3.200v6.600" strokeWidth="2.200" /></svg>
        </Slot>
        <Stack $w={87} $end><Label $size={15} $track={-1}>14:17</Label><Label $size={15} $track={-0.55}>01-10-2022</Label></Stack>
        <Slot $w={24} />
      </Taskbar>
    </Window>
  );
}
